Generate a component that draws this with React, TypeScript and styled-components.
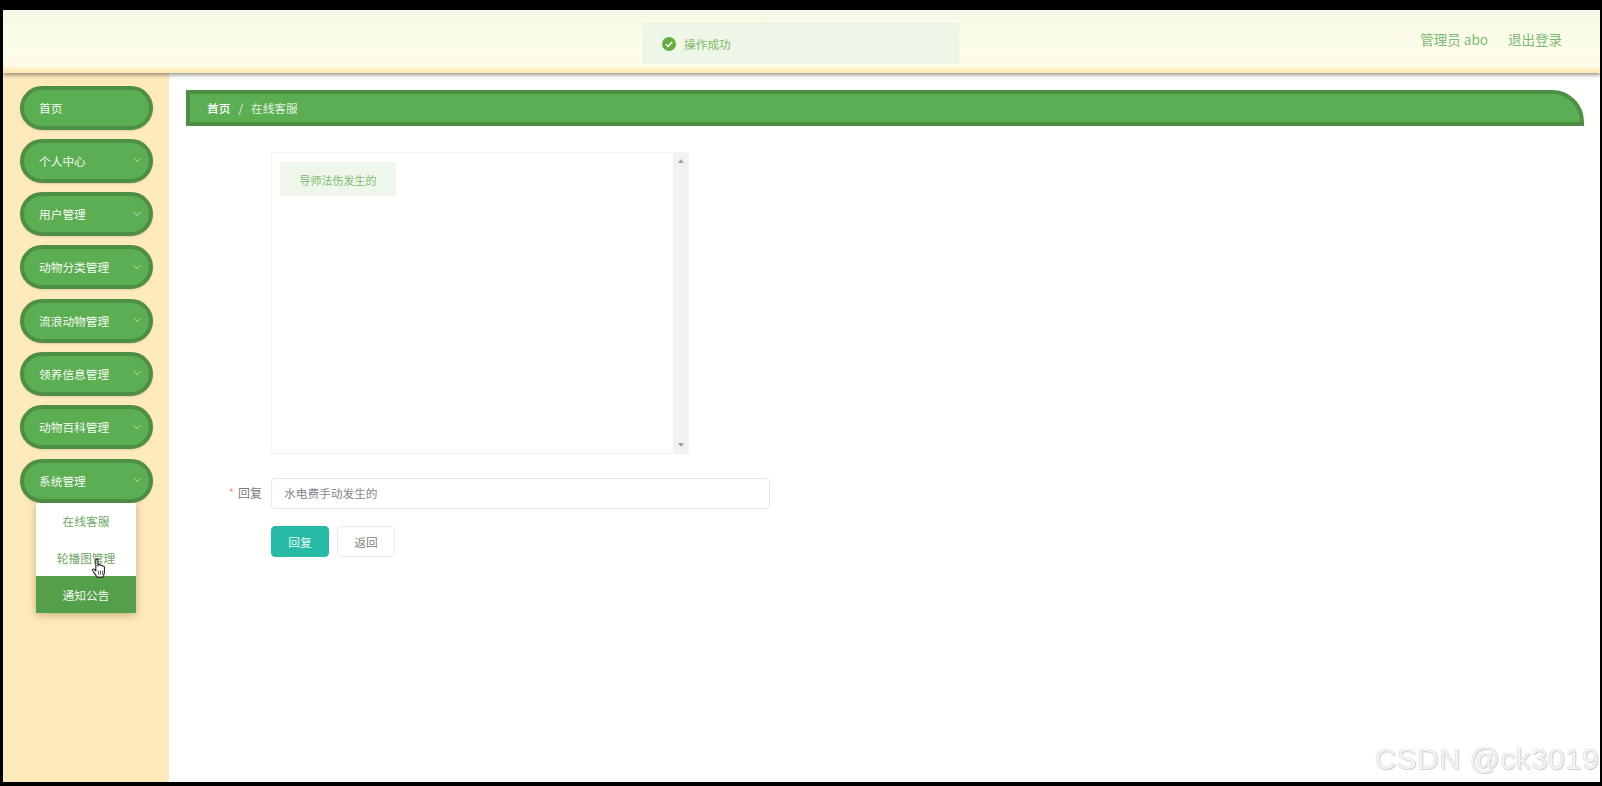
import React from 'react'
import styled, { createGlobalStyle } from 'styled-components'
import { ChevronDown } from 'lucide-react'

const FONT = `"Noto Sans CJK SC", "Liberation Sans", sans-serif`

const GlobalStyle = createGlobalStyle`
  html, body {
    margin: 0;
    height: 100%;
    background: #000;
    overflow: hidden;
    font-family: ${FONT};
  }
  * {
    box-sizing: border-box;
  }
`

const Frame = styled.div`
  width: 1602px;
  height: 786px;
  padding: 10px 2px 4px 3px;
  background: #000;
`

const Page = styled.div`
  position: relative;
  width: 100%;
  height: 100%;
  display: flex;
  flex-direction: column;
  overflow: hidden;
  background: #fffffe;
`

const Header = styled.header`
  position: relative;
  z-index: 3;
  flex: none;
  height: 63px;
  display: flex;
  align-items: center;
  justify-content: flex-end;
  gap: 20px;
  padding: 0 38px 6px 0;
  background: linear-gradient(#f2f9e7 0%, #f8fbe8 22%, #fdfde9 60%, #fefbe6 90%, #fdedbd 94%, #fdebb9 100%);
  box-shadow: 0 2px 4px rgba(60, 60, 60, 0.55);
`

const HeaderLink = styled.span`
  font-size: 13.5px;
  line-height: 20px;
  color: #7cb975;
`

const Toast = styled.div`
  position: absolute;
  left: 640px;
  top: 13px;
  width: 316px;
  height: 41px;
  display: flex;
  align-items: center;
  gap: 8px;
  padding-left: 18px;
  background: #edf6e7;
  border: 1px solid #e6f1df;
  font-size: 11.7px;
  color: #7fbb68;
`

const Body = styled.div`
  flex: 1;
  min-height: 0;
  display: flex;
`

const Sidebar = styled.aside`
  flex: none;
  width: 166px;
  display: flex;
  flex-direction: column;
  gap: 9.3px;
  padding: 12.5px 0 0 17px;
  background: #ffeabc;
`

const MenuGroup = styled.div`
  position: relative;
`

const Pill = styled.div`
  width: 133px;
  height: 44px;
  display: flex;
  align-items: center;
  justify-content: space-between;
  padding: 0 6px 1px 15px;
  background: #5bae51;
  border: 4px solid #4c8f45;
  border-radius: 22px;
  box-shadow: 0 1px 2px rgba(0, 0, 0, 0.12);
  font-size: 11.7px;
  color: #f6fbf4;

  svg {
    color: #e4f3e1;
  }
`

const SubMenu = styled.div`
  position: absolute;
  z-index: 2;
  left: 16px;
  top: 44px;
  width: 100px;
  display: flex;
  flex-direction: column;
  background: #fffffd;
  box-shadow: 0 2px 8px rgba(90, 70, 20, 0.35);
`

const SubItem = styled.div<{ $active?: boolean }>`
  height: 36.7px;
  display: flex;
  align-items: center;
  justify-content: center;
  font-size: 11.7px;
  color: ${({ $active }) => ($active ? '#f3f9f1' : '#6fa568')};
  background: ${({ $active }) => ($active ? '#54a04a' : 'transparent')};
`

const Cursor = styled.svg`
  position: absolute;
  z-index: 3;
  left: 71px;
  top: 99px;
  width: 17px;
  height: 21px;
`

const Main = styled.main`
  flex: 1;
  min-width: 0;
  padding: 17px 16px 0 17px;
`

const Breadcrumb = styled.nav`
  height: 36px;
  display: flex;
  align-items: center;
  gap: 8px;
  padding: 0 0 1px 17px;
  background: #5bae51;
  border: 4px solid #4c8f45;
  border-radius: 0 32px 0 0;
  font-size: 11.7px;
  color: #eef7ec;
`

const Crumb = styled.span<{ $strong?: boolean }>`
  color: ${({ $strong }) => ($strong ? '#ffffff' : '#e6f3e3')};
  font-weight: ${({ $strong }) => ($strong ? 500 : 400)};
`

const Form = styled.div`
  display: flex;
  flex-direction: column;
  padding: 26px 0 0 85px;
`

const ChatBox = styled.div`
  width: 418px;
  height: 302px;
  display: flex;
  justify-content: space-between;
  background: #fffffd;
  border: 1px solid #f2f2f0;
`

const Bubble = styled.div`
  width: 116px;
  height: 34px;
  margin: 9px 0 0 8px;
  padding-top: 1px;
  display: flex;
  align-items: center;
  justify-content: center;
  background: #eff6ec;
  font-size: 11px;
  color: #80bc70;
`

const ScrollTrack = styled.div`
  width: 15px;
  display: flex;
  flex-direction: column;
  justify-content: space-between;
  align-items: center;
  padding: 6px 0;
  background: #f2f2f2;
`

const Arrow = styled.span<{ $down?: boolean }>`
  width: 0;
  height: 0;
  border-left: 3.5px solid transparent;
  border-right: 3.5px solid transparent;
  ${({ $down }) =>
    $down ? 'border-top: 4px solid #a3a3a3;' : 'border-bottom: 4px solid #a3a3a3;'}
`

const Row = styled.div`
  position: relative;
  display: flex;
  align-items: center;
  margin-top: 24px;
`

const Label = styled.label`
  position: absolute;
  right: 100%;
  margin: 0 9px 2px 0;
  white-space: nowrap;
  font-size: 12px;
  color: #7a7a7a;
`

const Star = styled.span`
  margin-right: 4px;
  color: #f39a9a;
`

const InputBox = styled.div`
  width: 499px;
  height: 31px;
  display: flex;
  align-items: center;
  padding: 0 12px 2px;
  background: #fffffe;
  border: 1px solid #e8e8ea;
  border-radius: 4px;
  font-size: 11.7px;
  color: #85868a;
`

const Buttons = styled.div`
  display: flex;
  gap: 8px;
  margin-top: 17px;
`

const Button = styled.button<{ $primary?: boolean }>`
  width: 58px;
  height: 31px;
  padding: 0;
  border-radius: 4px;
  border: 1px solid ${({ $primary }) => ($primary ? '#27bba5' : '#ebebed')};
  background: ${({ $primary }) => ($primary ? '#27bba5' : '#fffffe')};
  color: ${({ $primary }) => ($primary ? '#e9f9f6' : '#808080')};
  font-family: ${FONT};
  font-size: 11.7px;
`

const Watermark = styled.div`
  position: absolute;
  right: 1px;
  bottom: 5px;
  font-family: "Liberation Sans", sans-serif;
  font-size: 29.7px;
  line-height: 36px;
  letter-spacing: 0.5px;
  color: #f3f3f3;
  text-shadow: 0 0 1px #bdbdbd, 1px 1px 1px #d2d2d2;
  white-space: nowrap;
`

const menus = ['个人中心', '用户管理', '动物分类管理', '流浪动物管理', '领养信息管理', '动物百科管理']

export default function App() {
  return (
    <>
      <GlobalStyle />
      <Frame>
        <Page>
          <Header>
            <Toast>
              <svg width="14" height="14" viewBox="0 0 14 14">
                <circle cx="7" cy="7" r="7" fill="#67ad3f" />
                <path d="M3.8 7.2l2.3 2.2 4.1-4.4" fill="none" stroke="#fff" strokeWidth="1.5" />
              </svg>
              操作成功
            </Toast>
            <HeaderLink>管理员 abo</HeaderLink>
            <HeaderLink>退出登录</HeaderLink>
          </Header>
          <Body>
            <Sidebar>
              <Pill>首页</Pill>
              {menus.map((name) => (
                <Pill key={name}>
                  {name}
                  <ChevronDown size={12} strokeWidth={1.5} />
                </Pill>
              ))}
              <MenuGroup>
                <Pill>
                  系统管理
                  <ChevronDown size={12} strokeWidth={1.5} />
                </Pill>
                <SubMenu>
                  <SubItem>在线客服</SubItem>
                  <SubItem>轮播图管理</SubItem>
                  <SubItem $active>通知公告</SubItem>
                </SubMenu>
                <Cursor viewBox="0 0 16 20">
                  <path
                    d="M4.500 1.800c0-1.200 2-1.200 2 0v6l.3-1.200c.9-.6 1.900-.4 2 .6.8-.6 1.800-.4 2 .6.8-.4 1.900-.1 1.900 1v4.600c0 2-.8 3-1.300 4.800H5.600c-.8-1.800-2.200-3.400-4-6-.7-1.200.5-2.300 1.600-1.300l1.300 1.400z"
                    fill="#fff"
                    stroke="#222"
                    strokeWidth="1"
                    strokeLinejoin="round"
                  />
                  <path d="M7 12v4M9 12v4M11 12v4" stroke="#222" strokeWidth=".7" />
                </Cursor>
              </MenuGroup>
            </Sidebar>
            <Main>
              <Breadcrumb>
                <Crumb $strong>首页</Crumb>
                <Crumb>/</Crumb>
                <Crumb>在线客服</Crumb>
              </Breadcrumb>
              <Form>
                <ChatBox>
                  <Bubble>导师法伤发生的</Bubble>
                  <ScrollTrack>
                    <Arrow />
                    <Arrow $down />
                  </ScrollTrack>
                </ChatBox>
                <Row>
                  <Label>
                    <Star>*</Star>回复
                  </Label>
                  <InputBox>水电费手动发生的</InputBox>
                </Row>
                <Buttons>
                  <Button $primary>回复</Button>
                  <Button>返回</Button>
                </Buttons>
              </Form>
            </Main>
          </Body>
          <Watermark>CSDN @ck3019</Watermark>
        </Page>
      </Frame>
    </>
  )
}
